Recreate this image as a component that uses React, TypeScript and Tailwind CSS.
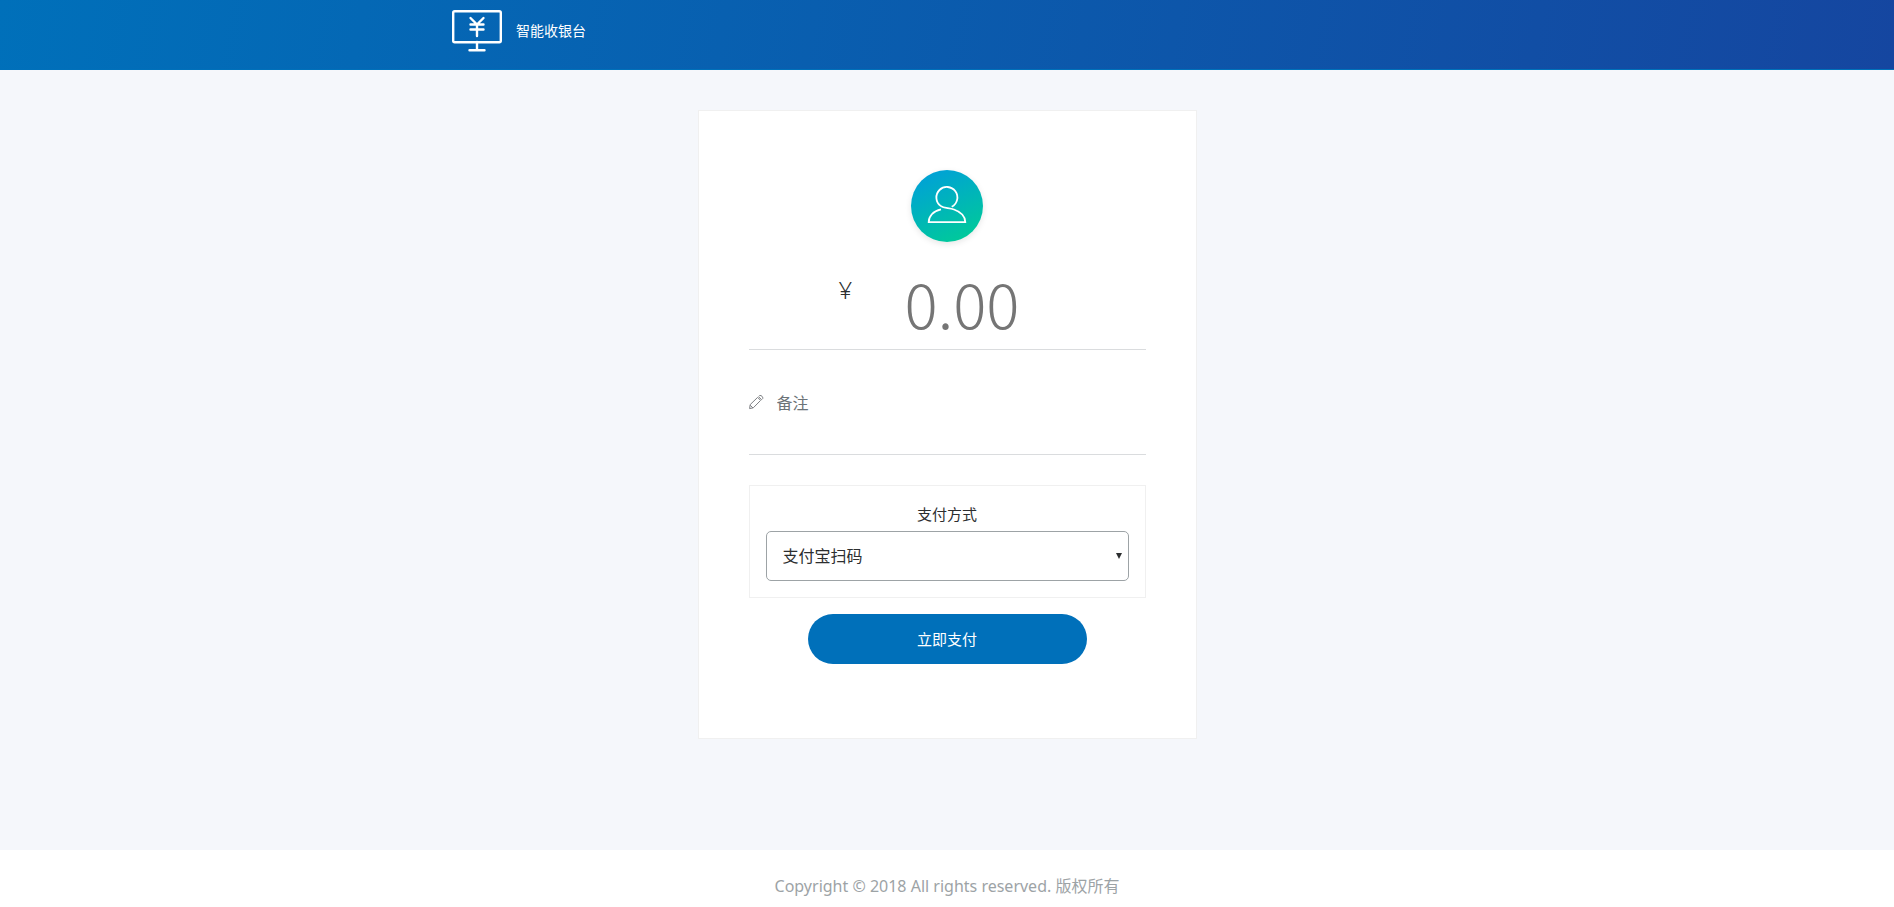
import { useState } from "react";

function MonitorIcon() {
  return (
    <svg width="50" height="42" viewBox="0 0 50 42" fill="none" stroke="#fff" strokeWidth="2.4" strokeLinecap="round" strokeLinejoin="round" aria-hidden="true">
      <rect x="1.2" y="1.2" width="47.6" height="31" rx="1.5" />
      <path d="M25 32v8M17.5 40.3h15M18.5 8l6.5 6.5L31.5 8M18.5 14.5h13M18.5 19.5h13M25 14.5V26" />
    </svg>
  );
}

function UserIcon() {
  return (
    <svg width="72" height="72" viewBox="0 0 72 72" fill="none" stroke="#fff" strokeWidth="1.8" aria-hidden="true">
      <path d="M40.7 36.8A10.5 10.5 0 1 0 29.6 35.9C33 38.6 38 37.6 43 39.5C50 42 54.3 46.5 54.3 52.2H17.7C17.7 46.5 22 41 30 39.4" />
    </svg>
  );
}

function PencilIcon() {
  return (
    <svg width="16" height="16" viewBox="0 0 16 16" fill="none" stroke="#7d7f83" strokeWidth="1" aria-hidden="true">
      <path d="M.6 14.6l.6-4L8.6 3.4l3 3-7.3 7.4zM1.2 11.2l2.8 2.8M10 2c1.6-1.8 5 1.2 3.4 3.2M9.4 2.6l3.4 3.2" />
    </svg>
  );
}

export default function App() {
  const [amount, setAmount] = useState("");
  const [note, setNote] = useState("");

  return (
    <div className="flex min-h-screen flex-col bg-white font-['Noto_Sans','Noto_Sans_CJK_SC',sans-serif] text-[#2c2e2f]">
      <header className="h-[70px] border-b border-[#0070ba] bg-[linear-gradient(100deg,#0070ba,#1546a0)]">
        <div className="mx-auto flex w-full max-w-[990px] items-center gap-3.5 pt-[10px]">
          <MonitorIcon />
          <h1 className="text-sm text-white">智能收银台</h1>
        </div>
      </header>

      <main className="bg-[#f5f7fb] px-4 pt-10 pb-[111px]">
        <form
          className="mx-auto flex w-full max-w-[499px] flex-col border border-[#f0f0f0] bg-white px-[50px] pt-[59px] pb-[74px]"
          onSubmit={(e) => e.preventDefault()}
        >
          <div className="self-center rounded-full bg-[linear-gradient(155deg,#009cde,#00cf92)] shadow-[0_2px_6px_rgba(0,0,0,0.1)]">
            <UserIcon />
          </div>

          <div className="mt-7 flex h-20 border-b border-[#dadcde] pl-[90px]">
            <label htmlFor="amount" className="w-[66px] pt-2 text-2xl leading-6 font-light">
              ¥
            </label>
            <input
              id="amount"
              inputMode="decimal"
              placeholder="0.00"
              value={amount}
              onChange={(e) => setAmount(e.target.value)}
              className="h-16 min-w-0 flex-1 font-['Noto_Sans_CJK_SC',sans-serif] text-[62px] leading-[64px] font-light outline-none placeholder:text-[#757575]"
            />
          </div>

          <div className="flex h-[105px] items-center gap-3 border-b border-[#dadcde]">
            <PencilIcon />
            <input
              aria-label="备注"
              placeholder="备注"
              value={note}
              onChange={(e) => setNote(e.target.value)}
              className="h-10 min-w-0 flex-1 pt-0.5 text-base outline-none placeholder:text-[#6c7378]"
            />
          </div>

          <div className="mt-[30px] border border-[#f0f0f0] p-4">
            <label htmlFor="method" className="block pb-[5px] text-center text-[15px] leading-6">
              支付方式
            </label>
            <div className="relative">
              <select
                id="method"
                className="block h-[50px] w-full appearance-none rounded-[5px] border border-[#9da3a6] bg-white px-4 text-base outline-none"
              >
                <option>支付宝扫码</option>
              </select>
              <svg className="pointer-events-none absolute top-[22px] right-[7px]" width="6" height="6" viewBox="0 0 6 6" fill="#2c2e2f" aria-hidden="true">
                <path d="M0 0h6L3 6z" />
              </svg>
            </div>
          </div>

          <button type="submit" className="mt-4 h-[50px] w-[279px] self-center rounded-full bg-[#0070ba] text-[15px] text-white">
            立即支付
          </button>
        </form>
      </main>

      <footer className="flex-1 pt-6 text-center text-base leading-6 text-[#9da3a6]">
        Copyright © 2018 All rights reserved. 版权所有
      </footer>
    </div>
  );
}
